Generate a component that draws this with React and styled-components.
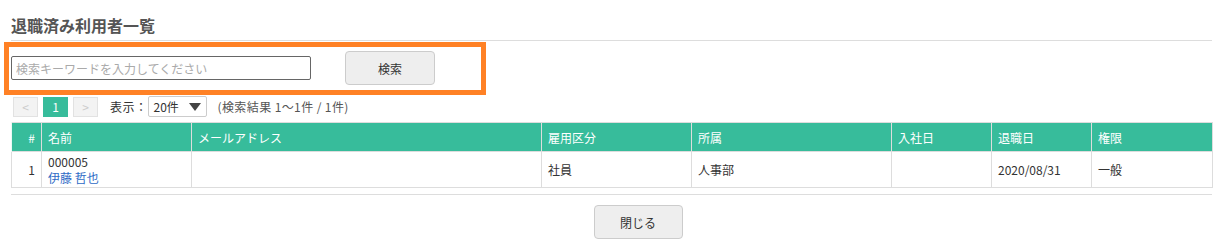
import React from "react";
import styled, { createGlobalStyle } from "styled-components";

const GlobalStyle = createGlobalStyle`
  body {
    margin: 0;
    background: #fff;
    font-family: "Noto Sans CJK JP", "Noto Sans", sans-serif;
    font-size: 12px;
    color: #333;
  }
`;

const Page = styled.div`
  position: relative;
  padding: 14px 6px 0 11px;
`;

const Title = styled.h2`
  margin: 0;
  font-size: 16px;
  line-height: 22px;
  font-weight: bold;
  color: #555;
  padding-bottom: 4px;
  border-bottom: 1px solid #ddd;
`;

const Highlight = styled.div`
  position: absolute;
  left: 4px;
  top: 42px;
  width: 472px;
  height: 43px;
  border: 5px solid #ff8125;
  pointer-events: none;
`;

const SearchRow = styled.div`
  display: flex;
  align-items: center;
  gap: 34px;
  margin-top: 10px;
`;

const SearchInput = styled.input`
  box-sizing: border-box;
  width: 300px;
  height: 24px;
  margin: 0;
  padding: 0 4px;
  border: 1px solid #666;
  border-radius: 2px;
  font-family: inherit;
  font-size: 12px;
  color: #333;
  &::placeholder {
    color: #aaa;
  }
`;

const Button = styled.button`
  box-sizing: border-box;
  width: ${(p) => p.$width || 90}px;
  height: 34px;
  border: 1px solid #ccc;
  border-radius: 4px;
  background: #eee;
  font-family: inherit;
  font-size: 12px;
  color: #333;
  cursor: pointer;
`;

const Pager = styled.div`
  display: flex;
  align-items: center;
  margin-top: 11px;
  padding-left: 2px;
`;

const PageButton = styled.span`
  box-sizing: border-box;
  display: inline-flex;
  align-items: center;
  justify-content: center;
  width: 25px;
  height: 20px;
  margin-right: 5px;
  font-size: 12px;
  background: ${(p) => (p.$active ? "#37bc9b" : "#f3f3f3")};
  color: ${(p) => (p.$active ? "#fff" : "#ccc")};
  border: 1px solid ${(p) => (p.$active ? "#37bc9b" : "#e2e2e2")};
`;

const Label = styled.span`
  margin-left: 7px;
  margin-right: 0;
  letter-spacing: 0.5px;
`;

const Select = styled.div`
  box-sizing: border-box;
  display: flex;
  align-items: center;
  justify-content: space-between;
  width: 59px;
  height: 21px;
  padding: 0 5px 0 5px;
  border: 1px solid #ccc;
  border-radius: 2px;
`;

const Caret = styled.span`
  width: 0;
  height: 0;
  border-left: 6px solid transparent;
  border-right: 6px solid transparent;
  border-top: 8px solid #444;
`;

const ResultInfo = styled.span`
  margin-left: 11px;
  color: #555;
  letter-spacing: 0.4px;
`;

const Table = styled.table`
  width: 1201px;
  margin-top: 5px;
  border-collapse: collapse;
  table-layout: fixed;
  border: 1px solid #ddd;
`;

const Th = styled.th`
  height: 28px;
  padding: 0 6px;
  background: #37bc9b;
  color: #fff;
  font-weight: normal;
  font-size: 12px;
  text-align: ${(p) => (p.$right ? "right" : "left")};
  border: 1px solid #ddd;
  border-top: none;
  border-bottom: none;
  border-left-color: #eafaf5;
`;

const Td = styled.td`
  height: 35px;
  padding: 0 6px;
  font-size: 12px;
  line-height: 16px;
  text-align: ${(p) => (p.$right ? "right" : "left")};
  border: 1px solid #ddd;
  vertical-align: middle;
`;

const Link = styled.a`
  color: #2e6bc6;
  text-decoration: none;
`;

const Footer = styled.div`
  display: flex;
  justify-content: center;
  margin-top: 6px;
  padding: 10px 0 0 53px;
  box-sizing: border-box;
  width: 1201px;
  border-top: 1px solid #ddd;
`;

const columns = [
  { label: "#", width: 30, right: true },
  { label: "名前", width: 150 },
  { label: "メールアドレス", width: 350 },
  { label: "雇用区分", width: 150 },
  { label: "所属", width: 200 },
  { label: "入社日", width: 100 },
  { label: "退職日", width: 100 },
  { label: "権限", width: 121 },
];

export default function App() {
  return (
    <>
      <GlobalStyle />
      <Page>
        <Title>退職済み利用者一覧</Title>
        <SearchRow>
          <SearchInput placeholder="検索キーワードを入力してください" />
          <Button>検索</Button>
        </SearchRow>
        <Pager>
          <PageButton>&lt;</PageButton>
          <PageButton $active>1</PageButton>
          <PageButton>&gt;</PageButton>
          <Label>表示：</Label>
          <Select>
            <span>20件</span>
            <Caret />
          </Select>
          <ResultInfo>(検索結果 1～1件 / 1件)</ResultInfo>
        </Pager>
        <Table>
          <colgroup>
            {columns.map((c) => (
              <col key={c.label} style={{ width: c.width }} />
            ))}
          </colgroup>
          <thead>
            <tr>
              {columns.map((c) => (
                <Th key={c.label} $right={c.right}>
                  {c.label}
                </Th>
              ))}
            </tr>
          </thead>
          <tbody>
            <tr>
              <Td $right>1</Td>
              <Td>
                000005
                <br />
                <Link href="#">伊藤 哲也</Link>
              </Td>
              <Td />
              <Td>社員</Td>
              <Td>人事部</Td>
              <Td />
              <Td>2020/08/31</Td>
              <Td>一般</Td>
            </tr>
          </tbody>
        </Table>
        <Footer>
          <Button $width={89}>閉じる</Button>
        </Footer>
        <Highlight />
      </Page>
    </>
  );
}
